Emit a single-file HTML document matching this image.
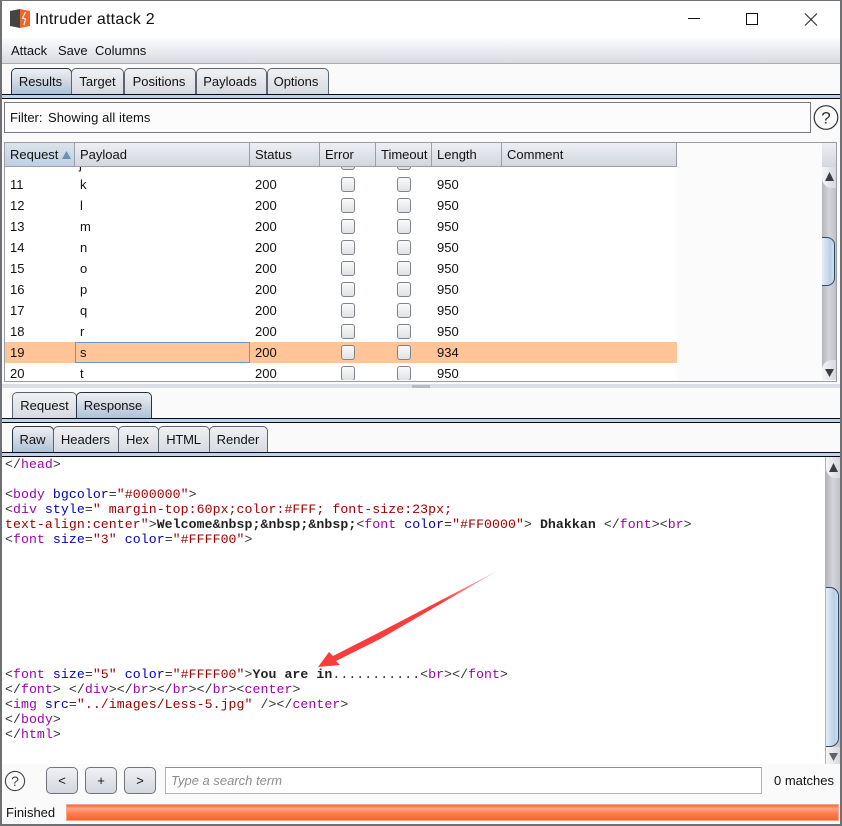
<!DOCTYPE html>
<html><head><meta charset="utf-8">
<style>
html,body{margin:0;padding:0;background:#fafafa}
#w{position:relative;width:842px;height:826px;overflow:hidden;background:#fafafa;font-family:"Liberation Sans",sans-serif;font-size:13px;color:#111}
#w div,#w span.a,#w svg{position:absolute}
.t{white-space:pre;line-height:16px;height:16px}
.tab{box-sizing:border-box;border:1px solid #5c6470;border-bottom:none;border-radius:5px 5px 0 0;background:linear-gradient(#f0f1f4,#d6d9e0);color:#111;text-align:center;white-space:pre;line-height:25px}
.tab.on{background:linear-gradient(#eef0f3 0%,#d5dce5 40%,#a9c1d8 100%);border-color:#243446}
.bar{background:#c0d3e6;border-top:1px solid #050a18;border-bottom:1px solid #050a18;box-sizing:border-box;height:5px}
.th{box-sizing:border-box;top:143px;height:24px;line-height:23px;background:linear-gradient(#eeeff3,#d3d6de);border-right:1px solid #9a9fa8;border-bottom:1px solid #9a9fa8;padding-left:5px;white-space:pre}
.cb{box-sizing:border-box;width:14px;height:15px;margin-top:-1px;border:1px solid #7f8287;border-radius:3px;background:linear-gradient(#fafafa,#dfe1e5)}
.btn{box-sizing:border-box;top:767px;width:32px;height:27px;border:1px solid #70757c;border-radius:5px;background:linear-gradient(#f0f1f4,#d3d6de);text-align:center;line-height:26px;font-size:13px}
.m{font-family:"Liberation Mono",monospace;font-size:13.2px;letter-spacing:.07px;line-height:15px;height:15px;white-space:pre;left:5px;color:#333}
.m i{font-style:normal}.m b{color:#222}
.p{color:#a000b0}.u{color:#0000c0}.r{color:#a00000}
.sbt{background:linear-gradient(90deg,#f4f5f7,#d6d8de)}
.tr{background:linear-gradient(90deg,#b4b6bc,#d4d5da 50%,#bfc0c6)}
.rw{margin-top:1px}
</style></head><body>
<div id="w">
<!-- window frame -->
<div style="left:0;top:0;width:842px;height:38px;background:#fff"></div>
<div style="left:0;top:38px;width:842px;height:26px;background:linear-gradient(#fbfbfc,#f1f2f5 30%,#d8dae0);border-bottom:1px solid #a8abb2;box-sizing:border-box"></div>
<!-- app icon -->
<svg style="left:10px;top:9px" width="21" height="20" viewBox="0 0 21 20"><path d="M0 2L10 0V19L0 17z" fill="#444"/><path d="M10 0L20 2V17L10 19z" fill="#f0652a"/><path d="M15.5 3l-3 6 3 1-1.5 6" stroke="#fff" stroke-width="1.1" fill="none"/></svg>
<div class="t" style="left:35px;top:10px;font-size:16px;letter-spacing:.25px;line-height:20px;height:20px;color:#111">Intruder attack 2</div>
<!-- window buttons -->
<div style="left:688px;top:18px;width:12px;height:1px;background:#111"></div>
<div style="left:746px;top:13px;width:10px;height:10px;border:1px solid #111"></div>
<svg style="left:804px;top:13px" width="14" height="14" viewBox="0 0 14 14"><path d="M1 0.500L13 12.500M13 0.500L1 12.500" stroke="#222" stroke-width="1" fill="none"/></svg>
<!-- menu -->
<div class="t" style="left:11px;top:43px">Attack</div>
<div class="t" style="left:58px;top:43px">Save</div>
<div class="t" style="left:95px;top:43px">Columns</div>
<!-- top tabs -->
<div class="tab on" style="left:11px;top:68px;width:61px;height:27px;padding-right:2px">Results</div>
<div class="tab" style="left:71px;top:68px;width:53px;height:27px">Target</div>
<div class="tab" style="left:124px;top:68px;width:72px;height:27px;padding-right:2px">Positions</div>
<div class="tab" style="left:196px;top:68px;width:71px;height:27px;padding-right:3px">Payloads</div>
<div class="tab" style="left:267px;top:68px;width:62px;height:27px;padding-right:4px">Options</div>
<div class="bar" style="left:1px;top:94px;width:840px"></div>
<!-- filter -->
<div style="left:4px;top:102px;width:805px;height:29px;border:1px solid #75787e;background:#fcfcfc"></div>
<div class="t" style="left:10px;top:110px">Filter:</div>
<div class="t" style="left:48px;top:110px;letter-spacing:.08px">Showing all items</div>
<svg style="left:813px;top:104px" width="26" height="27" viewBox="0 0 26 27"><circle cx="13" cy="13.5" r="11.8" fill="none" stroke="#333" stroke-width="1.2"/><text x="13" y="19.500" font-family="Liberation Sans" font-size="17" text-anchor="middle" fill="#333">?</text></svg>
<!-- table box -->
<div style="left:4px;top:142px;width:831px;height:238px;border:1px solid #9a9da4;background:#fbfbfc"></div>
<div style="left:5px;top:167px;width:672px;height:213px;background:#fff"></div>
<div class="th" style="left:5px;width:70px;background:linear-gradient(#dde3ea,#bdd0e2)">Request</div>
<svg style="left:62px;top:151px" width="9" height="8"><path d="M4.500 0L9 8H0z" fill="#6a90b8"/></svg>
<div class="th" style="left:75px;width:175px">Payload</div>
<div class="th" style="left:250px;width:70px">Status</div>
<div class="th" style="left:320px;width:56px">Error</div>
<div class="th" style="left:376px;width:56px">Timeout</div>
<div class="th" style="left:432px;width:70px">Length</div>
<div class="th" style="left:502px;width:175px">Comment</div>
<div style="left:822px;top:143px;width:14px;height:24px;background:linear-gradient(#eeeff3,#d3d6de)"></div>
<!-- clipped row -->
<div style="left:5px;top:167px;width:672px;height:6px;overflow:hidden"><div class="cb" style="left:336px;top:-11px"></div><div class="cb" style="left:392px;top:-11px"></div><div class="t" style="left:74px;top:-10px">j</div></div>
<!-- rows -->
<div style="left:5px;top:342px;width:672px;height:21px;background:#ffc497"></div>
<div style="left:75px;top:342px;width:173px;height:19px;border:1px solid #6d9bc9"></div>
<div class="t rw" style="left:10px;top:176px">11</div><div class="t rw" style="left:80px;top:176px">k</div><div class="t rw" style="left:255px;top:176px">200</div><div class="cb" style="left:341px;top:178px"></div><div class="cb" style="left:397px;top:178px"></div><div class="t rw" style="left:437px;top:176px">950</div>
<div class="t rw" style="left:10px;top:197px">12</div><div class="t rw" style="left:80px;top:197px">l</div><div class="t rw" style="left:255px;top:197px">200</div><div class="cb" style="left:341px;top:199px"></div><div class="cb" style="left:397px;top:199px"></div><div class="t rw" style="left:437px;top:197px">950</div>
<div class="t rw" style="left:10px;top:218px">13</div><div class="t rw" style="left:80px;top:218px">m</div><div class="t rw" style="left:255px;top:218px">200</div><div class="cb" style="left:341px;top:220px"></div><div class="cb" style="left:397px;top:220px"></div><div class="t rw" style="left:437px;top:218px">950</div>
<div class="t rw" style="left:10px;top:239px">14</div><div class="t rw" style="left:80px;top:239px">n</div><div class="t rw" style="left:255px;top:239px">200</div><div class="cb" style="left:341px;top:241px"></div><div class="cb" style="left:397px;top:241px"></div><div class="t rw" style="left:437px;top:239px">950</div>
<div class="t rw" style="left:10px;top:260px">15</div><div class="t rw" style="left:80px;top:260px">o</div><div class="t rw" style="left:255px;top:260px">200</div><div class="cb" style="left:341px;top:262px"></div><div class="cb" style="left:397px;top:262px"></div><div class="t rw" style="left:437px;top:260px">950</div>
<div class="t rw" style="left:10px;top:281px">16</div><div class="t rw" style="left:80px;top:281px">p</div><div class="t rw" style="left:255px;top:281px">200</div><div class="cb" style="left:341px;top:283px"></div><div class="cb" style="left:397px;top:283px"></div><div class="t rw" style="left:437px;top:281px">950</div>
<div class="t rw" style="left:10px;top:302px">17</div><div class="t rw" style="left:80px;top:302px">q</div><div class="t rw" style="left:255px;top:302px">200</div><div class="cb" style="left:341px;top:304px"></div><div class="cb" style="left:397px;top:304px"></div><div class="t rw" style="left:437px;top:302px">950</div>
<div class="t rw" style="left:10px;top:323px">18</div><div class="t rw" style="left:80px;top:323px">r</div><div class="t rw" style="left:255px;top:323px">200</div><div class="cb" style="left:341px;top:325px"></div><div class="cb" style="left:397px;top:325px"></div><div class="t rw" style="left:437px;top:323px">950</div>
<div class="t rw" style="left:10px;top:344px">19</div><div class="t rw" style="left:80px;top:344px">s</div><div class="t rw" style="left:255px;top:344px">200</div><div class="cb" style="left:341px;top:346px"></div><div class="cb" style="left:397px;top:346px"></div><div class="t rw" style="left:437px;top:344px">934</div>
<div class="t rw" style="left:10px;top:365px">20</div><div class="t rw" style="left:80px;top:365px">t</div><div class="t rw" style="left:255px;top:365px;height:15px;overflow:hidden">200</div><div style="left:341px;top:366px;width:14px;height:14px;overflow:hidden"><div class="cb" style="left:0;top:1px"></div></div><div style="left:397px;top:366px;width:14px;height:14px;overflow:hidden"><div class="cb" style="left:0;top:1px"></div></div><div class="t rw" style="left:437px;top:365px;height:15px;overflow:hidden">950</div>
<!-- table scrollbar -->
<div class="tr" style="left:822px;top:167px;width:14px;height:213px"></div>
<div style="left:822px;top:167px;width:14px;height:21px;background:linear-gradient(90deg,#f4f5f7,#d6d8de);border-radius:0 0 0 10px"></div>
<svg style="left:825px;top:172px" width="9" height="9"><path d="M4.500 0L9 9H0z" fill="#3a3d44"/></svg>
<div style="left:822px;top:237px;width:13px;height:49px;box-sizing:border-box;border:1px solid #2e4a64;border-left:none;border-radius:0 8px 8px 0;background:linear-gradient(90deg,#e4edf5,#b8d0e6 70%,#d0dfec)"></div>
<div style="left:822px;top:360px;width:14px;height:20px;background:linear-gradient(90deg,#f4f5f7,#d6d8de);border-radius:10px 0 0 0"></div>
<svg style="left:825px;top:369px" width="9" height="8"><path d="M0 0H9L4.500 8z" fill="#3a3d44"/></svg>
<!-- divider -->
<div style="left:2px;top:384px;width:838px;height:4px;background:#dcdee4"></div>
<div style="left:412px;top:385px;width:18px;height:3px;background:#b6bac2"></div>
<!-- req/resp tabs -->
<div class="tab" style="left:12px;top:392px;width:65px;height:27px">Request</div>
<div class="tab on" style="left:76px;top:392px;width:76px;height:27px;padding-right:2px">Response</div>
<div class="bar" style="left:2px;top:418px;width:838px"></div>
<!-- raw tabs -->
<div class="tab on" style="left:12px;top:426px;width:42px;height:27px;padding-right:1px">Raw</div>
<div class="tab" style="left:53px;top:426px;width:66px;height:27px;padding-right:1px">Headers</div>
<div class="tab" style="left:118px;top:426px;width:41px;height:27px;padding-right:2px">Hex</div>
<div class="tab" style="left:158px;top:426px;width:52px;height:27px;padding-right:1px;letter-spacing:-.2px">HTML</div>
<div class="tab" style="left:209px;top:426px;width:59px;height:27px;padding-right:1px">Render</div>
<div class="bar" style="left:2px;top:452px;width:838px"></div>
<!-- code -->
<div style="left:2px;top:457px;width:823px;height:307px;background:#fff"></div>
<div class="m" style="top:457px">&lt;/<i class="p">head</i>&gt;</div>
<div class="m" style="top:487px">&lt;<i class="p">body</i> <i class="u">bgcolor</i>=<i class="r">"#000000"</i>&gt;</div>
<div class="m" style="top:502px">&lt;<i class="p">div</i> <i class="u">style</i>=<i class="r">" margin-top:60px;color:#FFF; font-size:23px;</i></div>
<div class="m" style="top:517px"><i class="r">text-align:center"</i>&gt;<b>Welcome&amp;nbsp;&amp;nbsp;&amp;nbsp;</b>&lt;<i class="p">font</i> <i class="u">color</i>=<i class="r">"#FF0000"</i>&gt;<b> Dhakkan </b>&lt;/<i class="p">font</i>&gt;&lt;<i class="p">br</i>&gt;</div>
<div class="m" style="top:532px">&lt;<i class="p">font</i> <i class="u">size</i>=<i class="r">"3"</i> <i class="u">color</i>=<i class="r">"#FFFF00"</i>&gt;</div>
<div class="m" style="top:667px">&lt;<i class="p">font</i> <i class="u">size</i>=<i class="r">"5"</i> <i class="u">color</i>=<i class="r">"#FFFF00"</i>&gt;<b>You are in</b>...........&lt;<i class="p">br</i>&gt;&lt;/<i class="p">font</i>&gt;</div>
<div class="m" style="top:682px">&lt;/<i class="p">font</i>&gt; &lt;/<i class="p">div</i>&gt;&lt;/<i class="p">br</i>&gt;&lt;/<i class="p">br</i>&gt;&lt;/<i class="p">br</i>&gt;&lt;<i class="p">center</i>&gt;</div>
<div class="m" style="top:697px">&lt;<i class="p">img</i> <i class="u">src</i>=<i class="r">"../images/Less-5.jpg"</i> /&gt;&lt;/<i class="p">center</i>&gt;</div>
<div class="m" style="top:712px">&lt;/<i class="p">body</i>&gt;</div>
<div class="m" style="top:727px">&lt;/<i class="p">html</i>&gt;</div>
<!-- arrow -->
<svg style="left:0;top:0" width="842" height="826"><defs><linearGradient id="g" x1="499" y1="570" x2="440" y2="601" gradientUnits="userSpaceOnUse"><stop offset="0" stop-color="#ffd0d0"/><stop offset="1" stop-color="#f93c3c"/></linearGradient></defs><polygon points="499,570 380,632 333,656 329,652 318,667 340,665 336,661 380,639" fill="url(#g)"/></svg>
<!-- code scrollbar -->
<div style="left:825px;top:457px;width:1px;height:307px;background:#b0b2b8"></div>
<div class="tr" style="left:826px;top:457px;width:14px;height:307px"></div>
<div style="left:826px;top:457px;width:14px;height:21px;background:linear-gradient(90deg,#f4f5f7,#d6d8de);border-radius:0 0 0 10px"></div>
<svg style="left:829px;top:463px" width="9" height="9"><path d="M4.500 0L9 9H0z" fill="#3a3d44"/></svg>
<div style="left:826px;top:587px;width:13px;height:160px;box-sizing:border-box;border:1px solid #2e4a64;border-left:none;border-radius:0 9px 9px 0;background:linear-gradient(90deg,#e4edf5,#b8d0e6 70%,#d0dfec)"></div>
<div class="sbt" style="left:826px;top:747px;width:14px;height:17px"></div>
<svg style="left:829px;top:753px" width="9" height="8"><path d="M0 0H9L4.500 8z" fill="#60636a"/></svg>
<!-- search row -->
<svg style="left:4px;top:770px" width="22" height="22" viewBox="0 0 22 22"><circle cx="11" cy="11" r="9.6" fill="none" stroke="#444" stroke-width="1.1"/><text x="11" y="16" font-family="Liberation Sans" font-size="14" text-anchor="middle" fill="#444">?</text></svg>
<div class="btn" style="left:46px">&lt;</div>
<div class="btn" style="left:85px">+</div>
<div class="btn" style="left:124px">&gt;</div>
<div style="left:165px;top:767px;width:595px;height:25px;border:1px solid #b0b2b6;border-top-color:#8e9095;background:#fff"></div>
<div class="t" style="left:171px;top:773px;font-style:italic;color:#8a8c90">Type a search term</div>
<div class="t" style="left:774px;top:773px">0 matches</div>
<!-- status -->
<div class="t" style="left:6px;top:805px">Finished</div>
<div style="left:66px;top:804px;width:773px;height:17px;box-sizing:border-box;border:1px solid #f4a58c;background:linear-gradient(#f26a33,#ffa587 25%,#ff7f50 55%,#f9622c)"></div>
<!-- outer border -->
<div style="left:0;top:0;width:2px;height:826px;background:#6e7073"></div>
<div style="left:840px;top:0;width:2px;height:826px;background:#6e7073"></div>
<div style="left:0;top:0;width:842px;height:1px;background:#6e7073"></div>
<div style="left:0;top:824px;width:842px;height:2px;background:#6e7073"></div>
</div>
</body></html>
